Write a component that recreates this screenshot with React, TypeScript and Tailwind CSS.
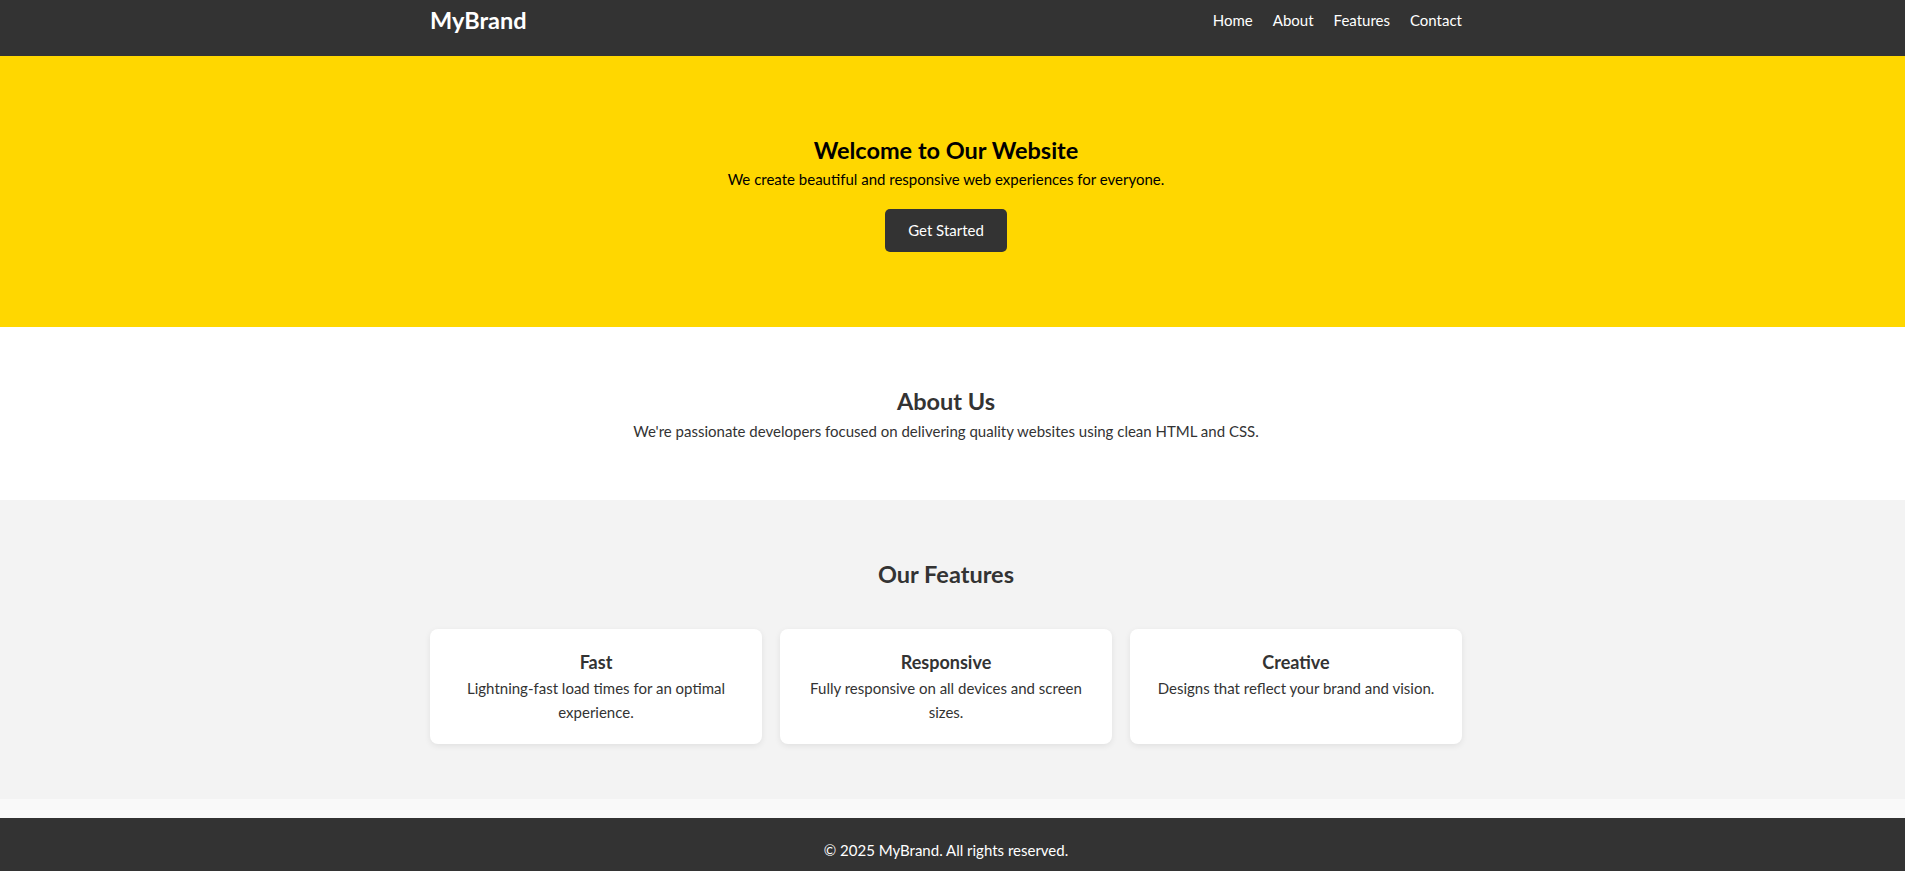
const features = [
  { title: "Fast", text: "Lightning-fast load times for an optimal experience." },
  { title: "Responsive", text: "Fully responsive on all devices and screen sizes." },
  { title: "Creative", text: "Designs that reflect your brand and vision." },
];

export default function App() {
  return (
    <div className="min-h-screen bg-[#f9f9f9] font-[Lato,sans-serif] text-[15px] text-[#333]">
      <header className="h-14 bg-[#333] pr-[13px] text-white">
        <div className="w-[1032px] mx-auto h-10 flex items-center justify-between">
          <span className="text-[23.5px] font-bold leading-7">MyBrand</span>
          <nav className="flex gap-5 leading-6">
            <a href="#">Home</a>
            <a href="#">About</a>
            <a href="#">Features</a>
            <a href="#">Contact</a>
          </nav>
        </div>
      </header>

      <section className="bg-[#ffd700] pt-[79px] pb-[75px] pr-[13px] text-center text-black">
        <h2 className="text-[23.5px] font-bold leading-[30px]">Welcome to Our Website</h2>
        <p className="mt-[2px] leading-6">We create beautiful and responsive web experiences for everyone.</p>
        <button className="mt-[18px] h-[43px] w-[122px] rounded-[5px] bg-[#333] text-white">Get Started</button>
      </section>

      <section className="bg-white pt-[59px] pb-[57px] pr-[13px] text-center">
        <h2 className="text-[23.5px] font-bold leading-[30px]">About Us</h2>
        <p className="mt-[3px] leading-6">
          We're passionate developers focused on delivering quality websites using clean HTML and CSS.
        </p>
      </section>

      <section className="bg-[#f3f3f3] pt-[59px] pb-[55px] pr-[13px] text-center">
        <h2 className="text-[23.5px] font-bold leading-[30px]">Our Features</h2>
        <div className="w-[1032px] mx-auto mt-[40px] grid grid-cols-3 gap-[18px]">
          {features.map((f) => (
            <div key={f.title} className="bg-white rounded-lg p-5 shadow-[0_2px_6px_rgba(0,0,0,0.08)]">
              <h3 className="text-lg font-bold leading-[27px]">{f.title}</h3>
              <p className="leading-6">{f.text}</p>
            </div>
          ))}
        </div>
      </section>

      <footer className="mt-[19px] bg-[#333] pt-5 pb-4 pr-[13px] text-center text-white leading-6">
        © 2025 MyBrand. All rights reserved.
      </footer>
    </div>
  );
}
